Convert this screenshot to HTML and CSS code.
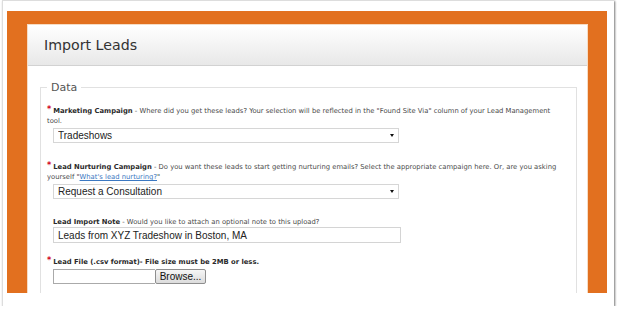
FILE: index.html
```html
<!DOCTYPE html>
<html lang="en">
<head>
  <meta charset="UTF-8">
  <title>Import Leads</title>
  <link rel="stylesheet" href="styles.css">
</head>
<body>
  <div class="shot">
    <div class="page">
      <div class="panel">
        <div class="panel-head">
          <h1>Import Leads</h1>
        </div>
        <div class="panel-body">
          <fieldset class="data">
            <legend>Data</legend>

            <div class="field">
              <p class="desc"><span class="req">*</span><b>Marketing Campaign</b> - Where did you get these leads? Your selection will be reflected in the "Found Site Via" column of your Lead Management tool.</p>
              <div class="select-wrap">
                <select class="select">
                  <option>Tradeshows</option>
                </select>
              </div>
            </div>

            <div class="field field-nurture">
              <p class="desc"><span class="req">*</span><b>Lead Nurturing Campaign</b> - Do you want these leads to start getting nurturing emails? Select the appropriate campaign here. Or, are you asking yourself "<a href="#">What's lead nurturing?</a>"</p>
              <div class="select-wrap">
                <select class="select">
                  <option>Request a Consultation</option>
                </select>
              </div>
            </div>

            <div class="field field-note">
              <p class="desc indent"><b>Lead Import Note</b> - Would you like to attach an optional note to this upload?</p>
              <input class="text" type="text" value="Leads from XYZ Tradeshow in Boston, MA">
            </div>

            <div class="field">
              <p class="desc"><span class="req">*</span><b>Lead File (.csv format)- File size must be 2MB or less.</b></p>
              <div class="file">
                <input class="file-name" type="text">
                <button class="browse" type="button">Browse...</button>
              </div>
            </div>
          </fieldset>
        </div>
      </div>
    </div>
  </div>
</body>
</html>
```

FILE: styles.css
```css
* {
  box-sizing: border-box;
}
html, body {
  margin: 0;
  padding: 0;
  background: #fff;
}
body {
  font-family: "DejaVu Sans", Verdana, sans-serif;
  color: #333;
}

/* screenshot frame */
.shot {
  margin-left: 2px;
  width: 612px;
  height: 306px;
  padding: 10px 7px 0 4px;
  background: #fff;
  border-top: 1px solid #ddd;
  border-left: 1px solid #ddd;
  box-shadow: 1px 1px 2px #777;
}

.page {
  height: 282px;
  padding: 14px 20px 0 21px;
  background: #e2701f;
  overflow: hidden;
}

.panel {
  background: #fff;
  min-height: 400px;
  box-shadow: 0 0 0 1px #f6dcc4;
}
.panel-head {
  height: 41px;
  padding-left: 16px;
  background: linear-gradient(#fff, #e8e8e8);
  border-bottom: 1px solid #d2d2d2;
  display: flex;
  align-items: center;
}
.panel-head h1 {
  margin: 0;
  font-size: 14.2px;
  font-weight: normal;
  color: #333;
}

.panel-body {
  padding: 15px 10px 0 12px;
}
fieldset.data {
  margin: 0;
  padding: 12px 6px 20px 6px;
  border: 1px solid #e1e1e1;
  min-height: 300px;
}
fieldset.data legend {
  padding: 0 4px;
  font-size: 11px;
  color: #555;
}

.field {
  margin-bottom: 19px;
}
.field-nurture {
  margin-bottom: 18px;
}
.field-note {
  margin-bottom: 14px;
}
.field-note .desc {
  margin-bottom: 0;
}
.desc {
  margin: 0 0 2px;
  padding-right: 8px;
  font-size: 6.8px;
  line-height: 10px;
  color: #4a4a4a;
}
.desc b {
  color: #2a2a2a;
}
.desc.indent {
  padding-left: 6px;
}
.desc a {
  color: #3b78c2;
}
.req {
  color: #d0021b;
  font-weight: bold;
  font-size: 8px;
  line-height: 0;
  margin-right: 2px;
  vertical-align: 1px;
}

.select-wrap {
  position: relative;
  width: 346px;
  margin-left: 6px;
}
.select-wrap::after {
  content: "";
  position: absolute;
  right: 5px;
  top: 6px;
  border-left: 2.5px solid transparent;
  border-right: 2.5px solid transparent;
  border-top: 3px solid #111;
}
.select {
  -webkit-appearance: none;
  appearance: none;
  display: block;
  width: 100%;
  height: 15px;
  padding: 0 0 0 4px;
  margin: 0;
  border: 1px solid #d6d6d6;
  border-radius: 0;
  background: #fff;
  font-family: "Liberation Sans", Arial, sans-serif;
  font-size: 10px;
  color: #222;
}

.text {
  display: block;
  width: 348px;
  height: 16px;
  margin: 0 0 0 6px;
  padding: 0 0 0 4px;
  border: 1px solid #d4d4d4;
  font-family: "Liberation Sans", Arial, sans-serif;
  font-size: 10px;
  color: #222;
}

.file {
  display: flex;
  margin-left: 6px;
}
.file-name {
  width: 102px;
  height: 15px;
  margin: 0;
  border: 1px solid #aaa;
  border-right: none;
}
.browse {
  width: 51px;
  height: 15px;
  padding: 0;
  border: 1px solid #8e8e8e;
  border-radius: 2px;
  background: linear-gradient(#f6f6f6, #dcdcdc);
  font-family: "Liberation Sans", Arial, sans-serif;
  font-size: 10px;
  color: #111;
}
```
